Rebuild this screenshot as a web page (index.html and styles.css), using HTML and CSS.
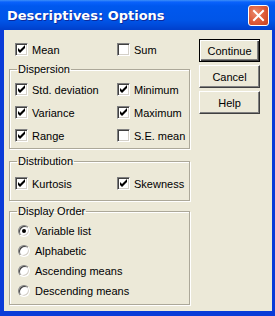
FILE: index.html
```html
<!DOCTYPE html>
<html lang="en">
<head>
    <meta charset="UTF-8">
    <title>Descriptives: Options</title>
    <link rel="stylesheet" href="styles.css">
</head>
<body>
    <div class="window">
        <div class="titlebar">
            <span class="title">Descriptives: Options</span>
            <span class="close">
                <svg width="19" height="19" viewBox="0 0 19 19">
                    <path d="M5 5 L14 14 M14 5 L5 14" stroke="#fff" stroke-width="2" stroke-linecap="square"/>
                </svg>
            </span>
        </div>
        <div class="client">
            <div class="options">
                <div class="row top-row">
                    <label class="item"><span class="check on"></span>Mean</label>
                    <label class="item"><span class="check"></span>Sum</label>
                </div>

                <fieldset class="group dispersion">
                    <legend>Dispersion</legend>
                    <div class="row">
                        <label class="item"><span class="check on"></span>Std. deviation</label>
                        <label class="item"><span class="check on"></span>Minimum</label>
                    </div>
                    <div class="row">
                        <label class="item"><span class="check on"></span>Variance</label>
                        <label class="item"><span class="check on"></span>Maximum</label>
                    </div>
                    <div class="row">
                        <label class="item"><span class="check on"></span>Range</label>
                        <label class="item"><span class="check"></span>S.E. mean</label>
                    </div>
                </fieldset>

                <fieldset class="group distribution">
                    <legend>Distribution</legend>
                    <div class="row">
                        <label class="item"><span class="check on"></span>Kurtosis</label>
                        <label class="item"><span class="check on"></span>Skewness</label>
                    </div>
                </fieldset>

                <fieldset class="group order">
                    <legend>Display Order</legend>
                    <label class="radio-item"><span class="radio on"></span>Variable list</label>
                    <label class="radio-item"><span class="radio"></span>Alphabetic</label>
                    <label class="radio-item"><span class="radio"></span>Ascending means</label>
                    <label class="radio-item"><span class="radio"></span>Descending means</label>
                </fieldset>
            </div>

            <div class="buttons">
                <button class="btn default">Continue</button>
                <button class="btn">Cancel</button>
                <button class="btn">Help</button>
            </div>
        </div>
    </div>
</body>
</html>
```

FILE: styles.css
```css
body {
    margin: 0;
    font-family: "Liberation Sans", Arial, sans-serif;
    font-size: 11px;
    color: #000;
}
.window {
    width: 275px;
    height: 316px;
    display: flex;
    flex-direction: column;
}
.titlebar {
    height: 30px;
    flex: none;
    display: flex;
    align-items: center;
    justify-content: space-between;
    padding: 0 6px 0 7px;
    background: linear-gradient(#3d8ff7 0, #0a62fc 2px, #0058ee 6px, #0055e8 20px, #0049d8 26px, #003fcb 30px);
}
.title {
    font-family: "DejaVu Sans", sans-serif;
    font-weight: bold;
    font-size: 13px;
    color: #fff;
    text-shadow: 1px 1px 0 #0c2a9c;
    padding-top: 1px;
}
.close {
    width: 21px;
    height: 21px;
    box-sizing: border-box;
    border: 1px solid #fff;
    border-radius: 3px;
    background: radial-gradient(circle at 35% 35%, #ea8a6c 0, #df5f3d 45%, #c8401d 100%);
    display: flex;
    margin-top: 1px;
}
.client {
    flex: 1;
    display: flex;
    gap: 9px;
    background: #ece9d8;
    border-left: 4px solid #0a3bd8;
    border-right: 3px solid #0a3bd8;
    border-bottom: 5px solid #0a3bd8;
    padding: 8px 0 0 5px;
}
.options {
    width: 181px;
    flex: none;
}
.row {
    display: grid;
    grid-template-columns: 102px 1fr;
    height: 23px;
    align-items: center;
}
.top-row {
    padding-left: 6px;
}
.item, .radio-item {
    display: flex;
    align-items: center;
    gap: 4px;
    white-space: nowrap;
}
.check {
    width: 13px;
    height: 13px;
    box-sizing: border-box;
    border: 1px solid;
    border-color: #808080 #fff #fff #808080;
    box-shadow: inset 1px 1px 0 #404040, inset -1px -1px 0 #d4d0c8;
    background: #fff;
    flex: none;
}
.check.on {
    background: #fff url("data:image/svg+xml,%3Csvg xmlns='http://www.w3.org/2000/svg' width='11' height='11'%3E%3Cpolygon points='2,4 4,6 9,1 9,4 4,9 2,7' fill='%23000'/%3E%3C/svg%3E") no-repeat 0 0;
}
.group {
    margin: 2px 0 0;
    padding: 2px 5px 1px;
    border: 1px solid #aca899;
    box-shadow: inset 1px 1px 0 #fff, 1px 1px 0 #fff;
    min-width: 0;
}
.group legend {
    padding: 0 1px;
    margin-left: 2px;
    line-height: 13px;
}
.distribution {
    margin-top: 6px;
    padding-top: 4px;
    padding-bottom: 5px;
}
.order {
    margin-top: 4px;
    padding-top: 3px;
    padding-bottom: 3px;
}
.radio-item {
    height: 20px;
    gap: 5px;
    padding-left: 3px;
}
.radio {
    width: 12px;
    height: 12px;
    box-sizing: border-box;
    border-radius: 50%;
    border: 1px solid;
    border-color: #808080 #fff #fff #808080;
    box-shadow: inset 1px 1px 0 #404040, inset -1px -1px 0 #d4d0c8;
    background: #fff;
    flex: none;
    display: flex;
    align-items: center;
    justify-content: center;
}
.radio.on::after {
    content: "";
    width: 4px;
    height: 4px;
    border-radius: 50%;
    background: #000;
}
.buttons {
    display: flex;
    flex-direction: column;
    gap: 3px;
    padding-top: 1px;
}
.btn {
    width: 61px;
    height: 23px;
    box-sizing: border-box;
    font-family: "Liberation Sans", Arial, sans-serif;
    font-size: 11px;
    color: #000;
    background: #ece9d8;
    border: 1px solid;
    border-color: #fff #404040 #404040 #fff;
    box-shadow: inset -1px -1px 0 #808080;
    padding: 0;
}
.btn.default {
    border-color: #000;
    box-shadow: inset 1px 1px 0 #fff, inset -1px -1px 0 #404040, inset -2px -2px 0 #808080;
}
```
